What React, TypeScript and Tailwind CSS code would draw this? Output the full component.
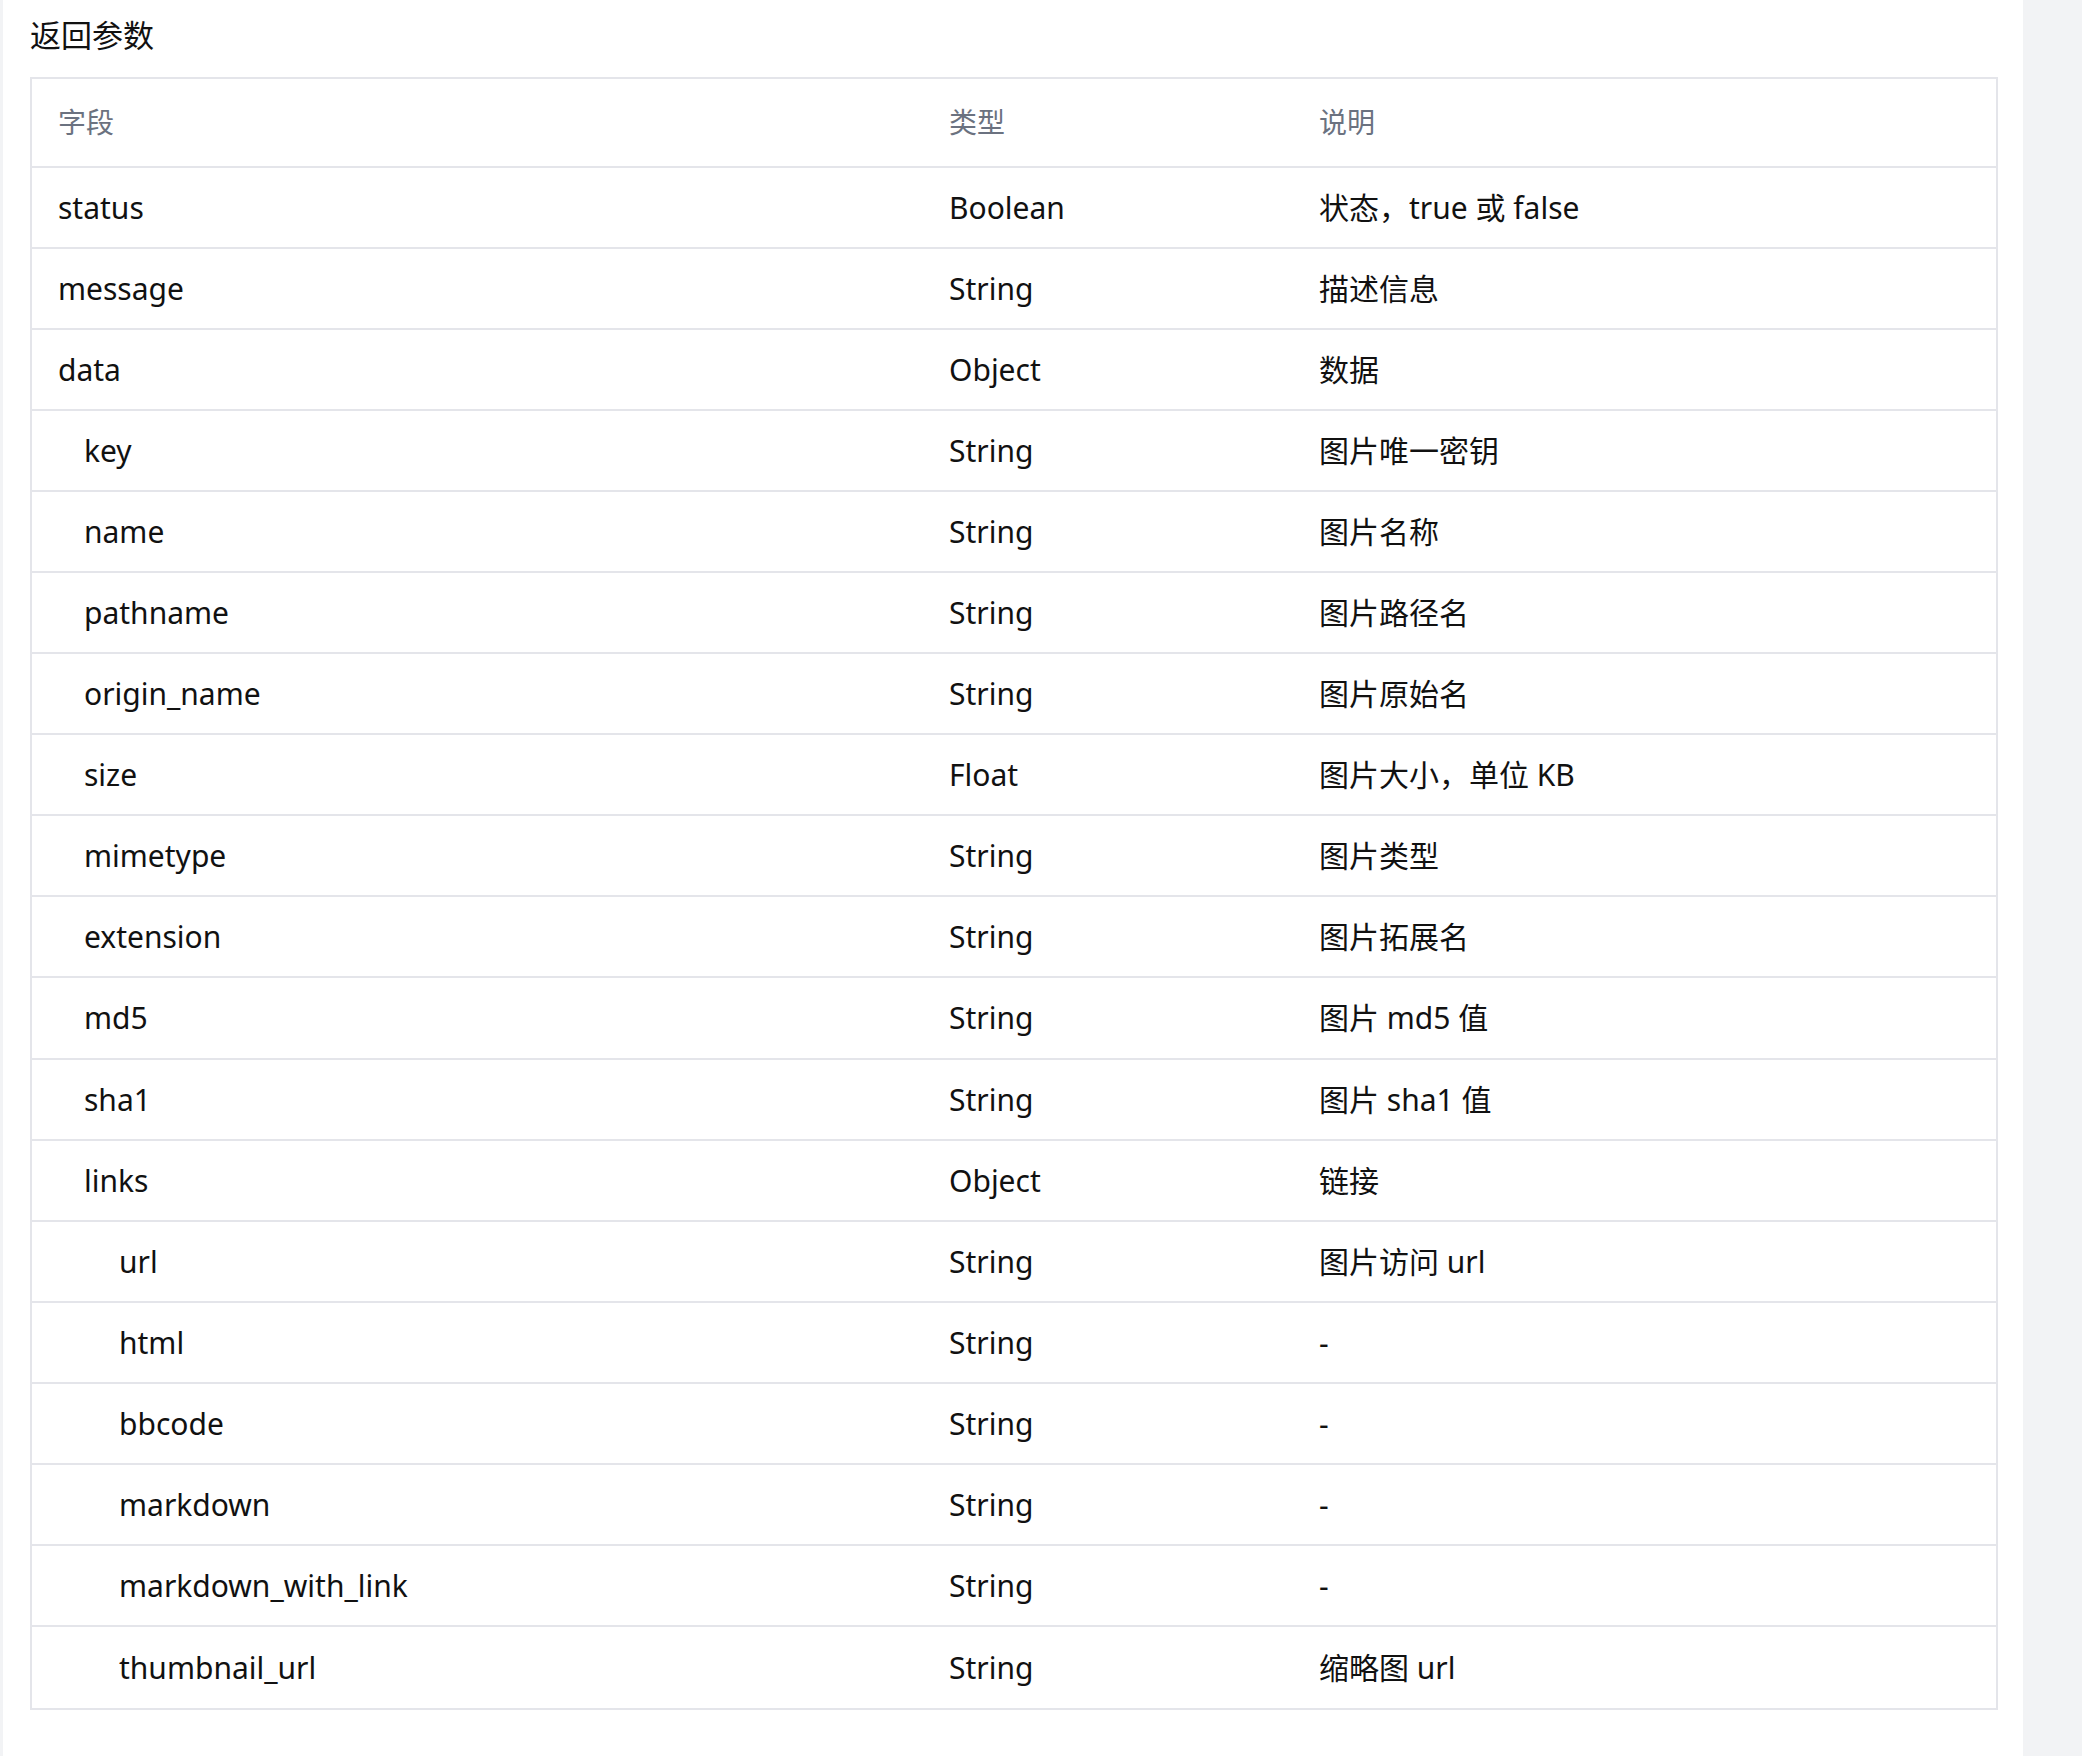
import React from 'react';

interface Field {
  name: string;
  type: string;
  desc: string;
  level: 0 | 1 | 2;
}

const fields: Field[] = [
  { name: 'status', type: 'Boolean', desc: '状态，true 或 false', level: 0 },
  { name: 'message', type: 'String', desc: '描述信息', level: 0 },
  { name: 'data', type: 'Object', desc: '数据', level: 0 },
  { name: 'key', type: 'String', desc: '图片唯一密钥', level: 1 },
  { name: 'name', type: 'String', desc: '图片名称', level: 1 },
  { name: 'pathname', type: 'String', desc: '图片路径名', level: 1 },
  { name: 'origin_name', type: 'String', desc: '图片原始名', level: 1 },
  { name: 'size', type: 'Float', desc: '图片大小，单位 KB', level: 1 },
  { name: 'mimetype', type: 'String', desc: '图片类型', level: 1 },
  { name: 'extension', type: 'String', desc: '图片拓展名', level: 1 },
  { name: 'md5', type: 'String', desc: '图片 md5 值', level: 1 },
  { name: 'sha1', type: 'String', desc: '图片 sha1 值', level: 1 },
  { name: 'links', type: 'Object', desc: '链接', level: 1 },
  { name: 'url', type: 'String', desc: '图片访问 url', level: 2 },
  { name: 'html', type: 'String', desc: '-', level: 2 },
  { name: 'bbcode', type: 'String', desc: '-', level: 2 },
  { name: 'markdown', type: 'String', desc: '-', level: 2 },
  { name: 'markdown_with_link', type: 'String', desc: '-', level: 2 },
  { name: 'thumbnail_url', type: 'String', desc: '缩略图 url', level: 2 },
];

const indent = ['pl-[26px]', 'pl-[52px]', 'pl-[87px]'];

const App: React.FC = () => {
  return (
    <div
      className="flex h-[1756px] w-full bg-[#f2f3f5] text-[30px] text-[#111111]"
      style={{ fontFamily: '"Noto Sans", "Noto Sans CJK SC", sans-serif' }}
    >
      <div className="w-[3px] shrink-0" />
      <main className="w-[2020px] shrink-0 bg-white pl-[27px] pr-[25px]">
        <h3 className="mt-[14px] text-[31px] font-normal leading-[42px]">返回参数</h3>
        <div className="mt-[21px] border-2 border-[#e4e5ea]">
          <div className="flex h-[89px] items-center border-b-2 border-[#e4e5ea] pb-[2px] text-[28px] text-[#6b7280]">
            <div className="w-[891px] pl-[26px]">字段</div>
            <div className="w-[370px] pl-[26px]">类型</div>
            <div className="flex-1 pl-[26px]">说明</div>
          </div>
          {fields.map((f, i) => (
            <div
              key={f.name}
              className={`flex h-[81.05px] items-center ${i < fields.length - 1 ? 'border-b-2 border-[#e4e5ea]' : ''}`}
            >
              <div className={`w-[891px] ${indent[f.level]}`}>{f.name}</div>
              <div className="w-[370px] pl-[26px]">{f.type}</div>
              <div className="flex-1 pl-[26px]">{f.desc}</div>
            </div>
          ))}
        </div>
      </main>
    </div>
  );
};

export default App;
